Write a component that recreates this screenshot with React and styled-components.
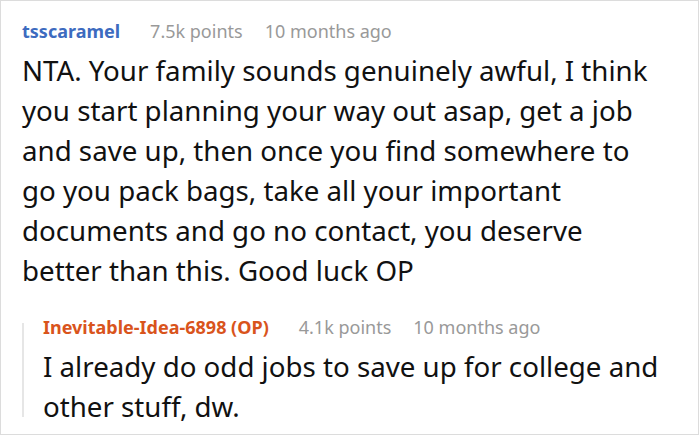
import React from "react";
import styled, { createGlobalStyle } from "styled-components";

const Global = createGlobalStyle`
  html, body { margin: 0; padding: 0; background: #fff; }
  body { font-family: "Noto Sans", "Open Sans", sans-serif; }
`;

const Card = styled.div`
  box-sizing: border-box;
  width: 699px;
  height: 435px;
  border: 1px solid #dcdcdc;
  padding: 14px 6px 0 21px;
  overflow: hidden;
`;

const Meta = styled.div`
  display: flex;
  align-items: baseline;
  font-size: 18px;
  line-height: 32px;
  white-space: nowrap;
`;

const Author = styled.span`
  font-weight: 700;
  margin-right: 30px;
  color: ${(p) => (p.$op ? "#d9541c" : "#3d6bbf")};
`;

const Points = styled.span`
  color: #999;
  margin-right: 22px;
`;

const Time = styled.span`
  color: #999;
`;

const Body = styled.p`
  margin: 3px 0 0;
  font-size: 27.7px;
  line-height: 40px;
  color: #111;
  white-space: nowrap;
`;

const Reply = styled.div`
  position: relative;
  margin-top: 21px;
  padding-left: 21px;
  &::before {
    content: "";
    position: absolute;
    left: 0;
    top: 12px;
    bottom: 9px;
    width: 2px;
    background: #e6e6e6;
  }
`;

function Comment({ author, op, points, time, lines }) {
  return (
    <>
      <Meta>
        <Author $op={op}>{author}</Author>
        <Points>{points}</Points>
        <Time>{time}</Time>
      </Meta>
      <Body>
        {lines.map((l, i) => (
          <React.Fragment key={i}>
            {i > 0 && <br />}
            {l}
          </React.Fragment>
        ))}
      </Body>
    </>
  );
}

export default function App() {
  return (
    <>
      <Global />
      <Card>
        <Comment
          author="tsscaramel"
          points="7.5k points"
          time="10 months ago"
          lines={[
            "NTA. Your family sounds genuinely awful, I think",
            "you start planning your way out asap, get a job",
            "and save up, then once you find somewhere to",
            "go you pack bags, take all your important",
            "documents and go no contact, you deserve",
            "better than this. Good luck OP",
          ]}
        />
        <Reply>
          <Comment
            author="Inevitable-Idea-6898 (OP)"
            op
            points="4.1k points"
            time="10 months ago"
            lines={[
              "I already do odd jobs to save up for college and",
              "other stuff, dw.",
            ]}
          />
        </Reply>
      </Card>
    </>
  );
}
